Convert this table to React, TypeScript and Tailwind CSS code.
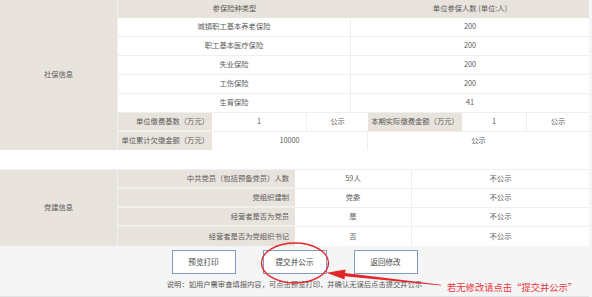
import React from "react";

const beige = "bg-[#e9e3dd]";

function Cell({ w, children, cls = "" }: { w: string; children?: React.ReactNode; cls?: string }) {
  return <div className={`${w} flex items-center justify-center ${cls}`}>{children}</div>;
}

export default function App() {
  const insRows: [string, string][] = [
    ["城镇职工基本养老保险", "200"],
    ["职工基本医疗保险", "200"],
    ["失业保险", "200"],
    ["工伤保险", "200"],
    ["生育保险", "41"],
  ];
  const partyRows: [string, string][] = [
    ["中共党员（包括预备党员）人数", "59人"],
    ["党组织建制", "党委"],
    ["经营者是否为党员", "是"],
    ["经营者是否为党组织书记", "否"],
  ];
  return (
    <div
      className="relative w-[592px] h-[297px] overflow-hidden bg-[#f5f5f5] text-[#5a5a5a] text-[7.3px] leading-none"
      style={{ fontFamily: "'Noto Sans CJK SC', 'Noto Sans', sans-serif" }}
    >
      <div className="w-[589px] flex flex-col">
        {/* 社保信息 */}
        <div className="flex h-[150px]">
          <div className={`w-[118px] ${beige} flex items-center justify-center border-r border-[#f2eeea]`}>社保信息</div>
          <div className="flex-1 flex flex-col">
            <div className={`flex h-[18px] ${beige}`}>
              <Cell w="w-[233px]">参保险种类型</Cell>
              <Cell w="flex-1">单位参保人数 (单位:人)</Cell>
            </div>
            {insRows.map(([a, b]) => (
              <div key={a} className="flex h-[19px] bg-white border-b border-[#efefef]">
                <Cell w="w-[233px]" cls="border-r border-[#efefef]">{a}</Cell>
                <Cell w="flex-1">{b}</Cell>
              </div>
            ))}
            <div className="flex h-[19px] bg-white border-b border-[#efefef]">
              <div className={`w-[94px] ${beige} flex items-center justify-end pr-[3px] border-b border-[#f3efeb]`}>单位缴费基数（万元）</div>
              <Cell w="w-[95px]" cls="border-r border-[#efefef]">1</Cell>
              <Cell w="w-[61px]">公示</Cell>
              <Cell w={`w-[94px] ${beige}`}>本期实际缴费金额（万元）</Cell>
              <Cell w="w-[65px]" cls="border-r border-[#efefef]">1</Cell>
              <Cell w="flex-1">公示</Cell>
            </div>
            <div className="flex h-[18px] bg-white">
              <div className={`w-[94px] ${beige} flex items-center justify-end pr-[3px]`}>单位累计欠缴金额（万元）</div>
              <Cell w="w-[156px]" cls="border-r border-[#efefef]">10000</Cell>
              <Cell w="flex-1">公示</Cell>
            </div>
          </div>
        </div>
        {/* gap */}
        <div className="h-[20px] bg-white border-b border-[#efefef]" />
        {/* 党建信息 */}
        <div className="flex h-[76px]">
          <div className={`w-[118px] ${beige} flex items-center justify-center border-r border-[#f2eeea]`}>党建信息</div>
          <div className="flex-1 flex flex-col">
            {partyRows.map(([a, b], i) => (
              <div key={a} className={`flex h-[19px] bg-white ${i < 3 ? "border-b border-[#efefef]" : ""}`}>
                <div className={`w-[177px] ${beige} flex items-center justify-end pr-[6px] ${i < 3 ? "border-b border-[#f3efeb]" : ""}`}>{a}</div>
                <Cell w="w-[117px]" cls="border-r border-[#efefef]">{b}</Cell>
                <Cell w="flex-1">不公示</Cell>
              </div>
            ))}
          </div>
        </div>
      </div>
      {/* bottom */}
      <div className="w-[589px] h-[51px] flex flex-col items-center border-b border-[#e2e2e2]">
        <div className="mt-[4px] flex gap-[27px] text-[7.6px] text-[#444]">
          <button className="w-[64px] h-[24px] bg-white border border-[#7f9cc6] flex items-center justify-center">预览打印</button>
          <button className="w-[64px] h-[24px] bg-white border border-[#7f9cc6] flex items-center justify-center">提交并公示</button>
          <button className="w-[64px] h-[24px] bg-white border border-[#7f9cc6] flex items-center justify-center">返回修改</button>
        </div>
        <div className="mt-[7px] text-[7.3px] text-[#555]">说明：如用户需审查填报内容，可点击预览打印，并确认无误后点击提交并公示</div>
      </div>
      {/* annotation overlay */}
      <svg className="absolute left-0 top-0 pointer-events-none" width="592" height="297" viewBox="0 0 592 297">
        <ellipse cx="295" cy="263" rx="33.5" ry="20" fill="none" stroke="#e3262c" strokeWidth="1.4" />
        <polygon points="326.5,272.8 345.5,269.4 344.5,279.4" fill="#e3262c" />
        <polygon points="345,273.0 344.6,276.2 441,285.5 441,284.7" fill="#e3262c" />
      </svg>
      <div className="absolute left-[447px] top-[283px] text-[9.3px] leading-none text-[#e8363c] whitespace-nowrap">
        若无修改请点击“提交并公示”
      </div>
    </div>
  );
}
